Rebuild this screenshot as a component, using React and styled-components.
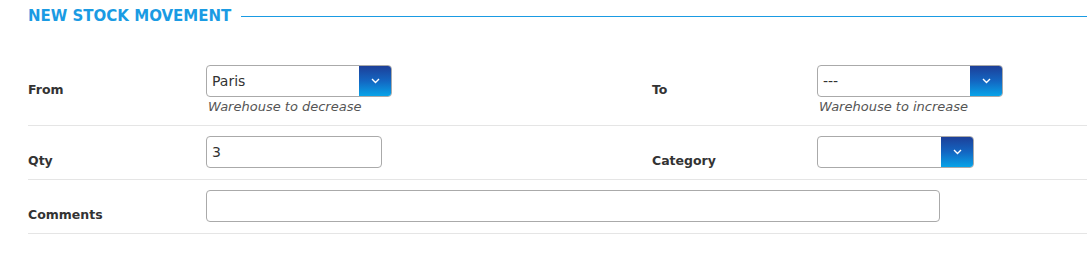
import React from 'react';
import styled, { createGlobalStyle } from 'styled-components';

const GlobalStyle = createGlobalStyle`
    body {
        margin: 0;
        background: #fff;
        font-family: 'DejaVu Sans', 'Open Sans', sans-serif;
        color: #333;
    }
`;

const Wrapper = styled.div`
    width: 1087px;
    padding: 6px 0 0 28px;
    box-sizing: border-box;
`;

const Legend = styled.div`
    display: flex;
    align-items: center;
    gap: 10px;
    height: 20px;
    margin-bottom: 29px;
`;

const LegendTitle = styled.span`
    font-size: 15px;
    font-weight: bold;
    color: #1a9be3;
    white-space: nowrap;
`;

const LegendLine = styled.div`
    flex: 1;
    height: 1px;
    background: #1a9be3;
`;

const Row = styled.div`
    display: grid;
    grid-template-columns: 178px 446px 165px 1fr;
    align-items: start;
    padding: 10px 0 11px;
    border-bottom: 1px solid #e5e5e5;
`;

const Label = styled.div`
    font-size: 12.5px;
    font-weight: bold;
    color: #333;
    line-height: 15px;
    padding-top: 17px;
`;

const Field = styled.div`
    display: flex;
    flex-direction: column;
    grid-column: ${({ $span }) => ($span ? `span ${$span}` : 'auto')};
`;

const Hint = styled.div`
    font-size: 13px;
    font-style: italic;
    color: #555;
    line-height: 15px;
    margin: 2px 0 0 2px;
`;

const Input = styled.div`
    width: ${({ $w }) => $w}px;
    height: 32px;
    box-sizing: border-box;
    border: 1px solid #aaa;
    border-radius: 4px;
    display: flex;
    align-items: center;
    padding-left: 5px;
    font-size: 14px;
    color: #333;
`;

const Select = styled.div`
    width: ${({ $w }) => $w}px;
    height: 32px;
    box-sizing: border-box;
    border: 1px solid #aaa;
    border-radius: 4px;
    display: flex;
    overflow: hidden;
`;

const SelectValue = styled.div`
    flex: 1;
    display: flex;
    align-items: center;
    padding-left: 5px;
    font-size: 14px;
    color: #333;
`;

const SelectButton = styled.div`
    width: 32px;
    display: flex;
    align-items: center;
    justify-content: center;
    background: linear-gradient(180deg, #1d3f98 0%, #1366c2 50%, #07a3e8 100%);
`;

const Chevron = () => (
    <svg width="9" height="6" viewBox="0 0 9 6">
        <path d="M1 1l3.5 3.5L8 1" fill="none" stroke="#fff" strokeWidth="1.4" />
    </svg>
);

const Dropdown = ({ width, value }) => (
    <Select $w={width}>
        <SelectValue>{value}</SelectValue>
        <SelectButton>
            <Chevron />
        </SelectButton>
    </Select>
);

const App = () => (
    <>
        <GlobalStyle />
        <Wrapper>
            <Legend>
                <LegendTitle>NEW STOCK MOVEMENT</LegendTitle>
                <LegendLine />
            </Legend>
            <Row>
                <Label>From</Label>
                <Field>
                    <Dropdown width={186} value="Paris" />
                    <Hint>Warehouse to decrease</Hint>
                </Field>
                <Label>To</Label>
                <Field>
                    <Dropdown width={186} value="---" />
                    <Hint>Warehouse to increase</Hint>
                </Field>
            </Row>
            <Row>
                <Label>Qty</Label>
                <Field>
                    <Input $w={176}>3</Input>
                </Field>
                <Label>Category</Label>
                <Field>
                    <Dropdown width={157} value="" />
                </Field>
            </Row>
            <Row>
                <Label>Comments</Label>
                <Field $span={3}>
                    <Input $w={734} />
                </Field>
            </Row>
        </Wrapper>
    </>
);

export default App;
